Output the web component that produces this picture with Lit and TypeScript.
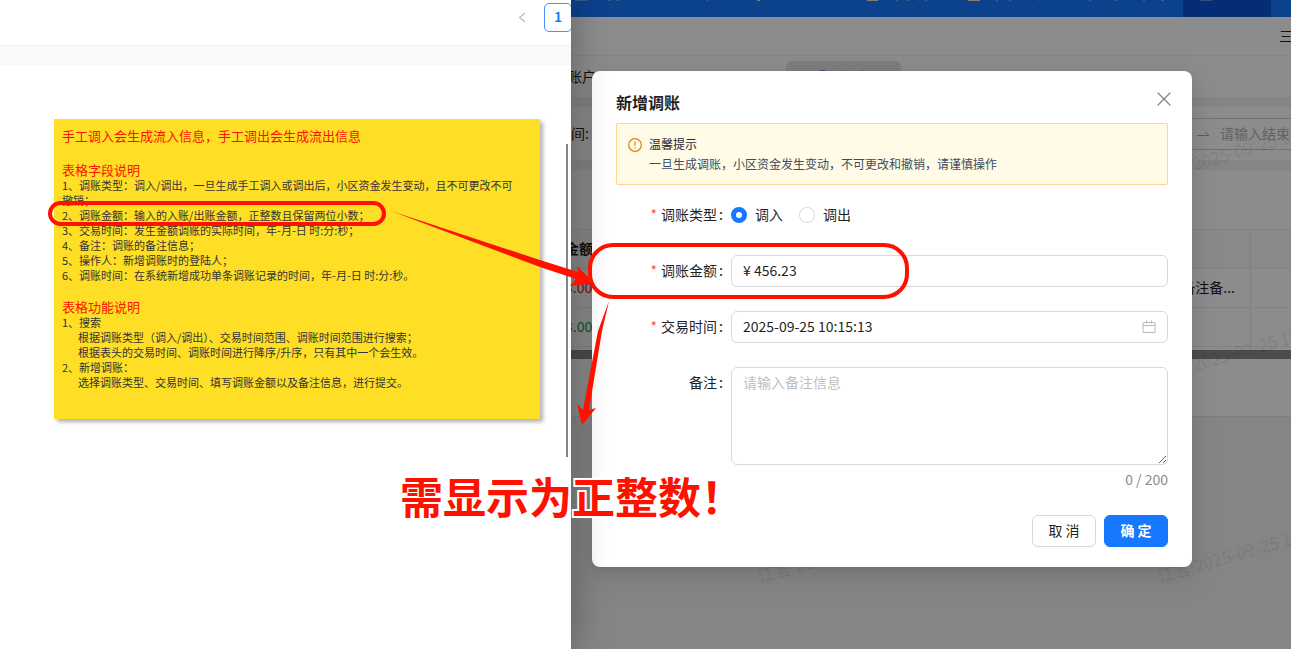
import { LitElement, html, css, svg } from "lit";
import { customElement } from "lit/decorators.js";

const FONT = css`"Noto Sans CJK SC", "Noto Sans", sans-serif`;

/* Requirement notes on the left side of the board. */
@customElement("note-pane")
class NotePane extends LitElement {
  static styles = css`
    :host {
      display: block;
      position: relative;
      z-index: 3;
      background: #fff;
      box-shadow: 6px 0 30px rgba(0, 0, 0, 0.25);
      font-family: ${FONT};
    }
    .pager {
      display: flex;
      justify-content: flex-end;
      align-items: flex-start;
      gap: 15px;
      height: 46px;
      box-sizing: border-box;
      padding-top: 3px;
      border-bottom: 1px solid #f0f0f0;
      overflow: hidden;
    }
    .prev, .page {
      box-sizing: border-box;
      height: 29px;
      padding: 0 0 2px;
      background: #fff;
      font: bold 13px/25px ${FONT};
    }
    .prev {
      width: 14px;
      border: 0;
      display: flex;
      align-items: center;
      justify-content: center;
    }
    .page {
      width: 28px;
      margin-right: -1px;
      border: 1px solid #4a90ff;
      border-radius: 5px;
      color: #1677ff;
    }
    .band { height: 19px; background: #f8f9fb; }
    .note {
      margin: 54px 31px 0 54px;
      padding: 8px 8px 29px;
      background: #ffde26;
      box-shadow: 3px 3px 4px rgba(0, 0, 0, 0.3);
      color: #333;
      font-size: 11px;
      line-height: 15px;
    }
    .note h2, .note p { margin: 0; font-weight: 400; }
    .note h2 { color: #f10; font-size: 13px; line-height: 17px; }
    .note .lead { margin-bottom: 17px; }
    .note .next { margin-top: 15px; }
    .note .sub { padding-left: 16px; }
    .thumb {
      position: absolute;
      right: 3px;
      top: 144px;
      width: 2px;
      height: 313px;
      background: #858585;
    }
  `;
  render() {
    return html`
      <nav class="pager">
        <button class="prev" aria-label="上一页">
          <svg width="10" height="12" viewBox="0 0 10 12" fill="none" stroke="#b8b8b8" stroke-width="1.1"><path d="M8 2 2.500 6.500l5.500 4.500" /></svg>
        </button>
        <button class="page">1</button>
      </nav>
      <div class="band"></div>
      <article class="note">
        <h2 class="lead">手工调入会生成流入信息，手工调出会生成流出信息</h2>
        <h2>表格字段说明</h2>
        <p>1、调账类型：调入/调出，一旦生成手工调入或调出后，小区资金发生变动，且不可更改不可<br />撤销；</p>
        <p>2、调账金额：输入的入账/出账金额，正整数且保留两位小数；</p>
        <p>3、交易时间：发生金额调账的实际时间，年-月-日 时:分:秒；</p>
        <p>4、备注：调账的备注信息；</p>
        <p>5、操作人：新增调账时的登陆人；</p>
        <p>6、调账时间：在系统新增成功单条调账记录的时间，年-月-日 时:分:秒。</p>
        <h2 class="next">表格功能说明</h2>
        <p>1、搜索</p>
        <p class="sub">根据调账类型（调入/调出）、交易时间范围、调账时间范围进行搜索；</p>
        <p class="sub">根据表头的交易时间、调账时间进行降序/升序，只有其中一个会生效。</p>
        <p>2、新增调账：</p>
        <p class="sub">选择调账类型、交易时间、填写调账金额以及备注信息，进行提交。</p>
      </article>
      <div class="thumb"></div>
    `;
  }
}

/* Dimmed list page behind the dialog. */
@customElement("ledger-page")
class LedgerPage extends LitElement {
  static styles = css`
    :host {
      display: block;
      position: relative;
      overflow: hidden;
      background: #f2f2f2;
      color: #1f1f1f;
      font: 14px/22px ${FONT};
    }
    .top {
      display: flex;
      justify-content: flex-end;
      height: 17px;
      padding-right: 20px;
      background: #1677ff;
    }
    .current { width: 88px; background: #0852d8; }
    .tools {
      display: flex;
      justify-content: flex-end;
      height: 39px;
      box-sizing: border-box;
      padding-top: 7px;
      background: #fff;
      border-bottom: 1px solid #f0f0f0;
    }
    .tools span { width: 12px; white-space: nowrap; }
    .tabs {
      display: flex;
      gap: 190px;
      height: 41px;
      box-sizing: border-box;
      padding-top: 5px;
      background: #fff;
      line-height: 30px;
    }
    .tabs a { color: inherit; text-decoration: none; text-indent: -3px; }
    .tabs a.on {
      width: 88px;
      padding-left: 27px;
      border-radius: 6px 6px 0 0;
      background: #e4e4e4;
      color: #1677ff;
      text-indent: 0;
    }
    .filter {
      display: flex;
      align-items: center;
      justify-content: space-between;
      height: 53px;
      margin: 10px 0;
      background: #fff;
      white-space: nowrap;
    }
    .filter > span, .range span { padding-bottom: 2px; }
    .range {
      display: flex;
      align-items: center;
      gap: 10px;
      width: 94px;
      height: 30px;
      padding-left: 40px;
      border: solid #d0d0d0;
      border-width: 1px 0;
      color: #b4b4b4;
    }
    .range span { width: 71px; }
    .card { padding: 59px 0 57px; background: #fff; border-bottom: 1px solid #e6e6e6; }
    table { width: 100%; border-collapse: collapse; table-layout: fixed; }
    th, td {
      height: 36px;
      padding: 0 0 2px;
      border: solid #ededed;
      border-width: 1px 0 0;
      text-align: left;
      text-indent: -6px;
    }
    th { background: #fafafa; font-weight: 700; }
    tr:last-child td { border-bottom-width: 1px; }
    .amount { width: 500px; }
    .remark { padding-right: 15px; border-right-width: 1px; text-align: right; }
    .rest { width: 40px; }
    .in { color: #d9202a; }
    .out { color: #12a05c; }
    .bar { height: 9px; margin-top: 3px; background: #8a8a8a; }
    .mask { position: absolute; inset: 0; background: rgba(0, 0, 0, 0.45); }
    .marks {
      position: absolute;
      left: 0;
      top: 0;
      font-size: 17px;
      fill: rgba(0, 0, 0, 0.09);
    }
    .bits { position: absolute; left: 0; top: 0; }
  `;
  render() {
    const marks = [[189, 583], [587, 181], [587, 382], [589, 583]];
    return html`
      <div class="top"><div class="current"></div></div>
      <svg class="bits" width="720" height="2" fill="#fff" aria-hidden="true">
        <path opacity=".35" d="M4 0h12v1H4zM37 0h3v1h-3zM45 0h3v1h-3zM135 0h2v1h-2zM629 0h12v1h-12z" />
        <path fill="#f4e3c0" d="M186 0h3v1h-3zM296 0h11v1h-11zM397 0h12v1h-12z" />
        <path opacity=".4" d="M325 0h2v1h-2zM335 0h3v1h-3zM347 0h1v1h-1zM354 0h2v1h-2zM425 0h2v1h-2zM438 0h2v1h-2zM467 0h1v1h-1zM518 0h2v1h-2zM543 0h3v1h-3zM572 0h2v1h-2zM590 0h3v1h-3z" />
      </svg>
      <div class="tools"><span>三</span></div>
      <nav class="tabs"><a href="#">账户</a><a class="on" href="#">手工调账</a></nav>
      <div class="filter">
        <span>间:</span>
        <div class="range">
          <svg width="13" height="8" viewBox="0 0 13 8" fill="none" stroke="#aaa"><path d="M0 5.500h12L8 2" /></svg>
          <span>请输入结束</span>
        </div>
      </div>
      <section class="card">
        <table>
          <thead><tr><th class="amount">金额</th><th class="remark"></th><th class="rest"></th></tr></thead>
          <tbody>
            <tr><td class="in">3.00</td><td class="remark">备注备...</td><td></td></tr>
            <tr><td class="out">3.00</td><td class="remark"></td><td></td></tr>
          </tbody>
        </table>
        <div class="bar"></div>
      </section>
      <div class="mask"></div>
      <svg class="marks" width="720" height="649" aria-hidden="true">
        ${marks.map(([x, y]) => svg`<text transform="translate(${x} ${y}) rotate(-16)">江言 2025-09-25 10:15</text>`)}
      </svg>
    `;
  }
}

/* Dialog for adding an adjustment entry. */
@customElement("adjust-dialog")
class AdjustDialog extends LitElement {
  static styles = css`
    :host {
      display: block;
      box-sizing: border-box;
      width: 600px;
      padding: 20px 24px;
      border-radius: 8px;
      background: #fff;
      box-shadow: 0 6px 16px rgba(0, 0, 0, 0.08), 0 3px 6px -4px rgba(0, 0, 0, 0.12), 0 9px 28px 8px rgba(0, 0, 0, 0.05);
      color: #1f1f1f;
      font: 14px/22px ${FONT};
    }
    header { display: flex; justify-content: space-between; align-items: flex-start; }
    h1 { margin: 0 0 2px; font-size: 16px; line-height: 22px; font-weight: 700; }
    .close {
      display: flex;
      width: 16px;
      height: 16px;
      margin-right: -4px;
      padding: 0;
      border: 0;
      background: none;
    }
    .alert {
      display: grid;
      grid-template-columns: 14px 1fr;
      gap: 0 7px;
      margin: 8px 0 14px;
      padding: 10px 11px;
      border: 1px solid #ffd591;
      border-radius: 2px;
      background: #fffbe6;
      color: #414b5c;
      font-size: 12px;
      line-height: 20px;
    }
    .alert svg { margin-top: 4px; }
    .alert strong { font-weight: 400; color: #1f2838; }
    .alert span { grid-column: 2; }
    form { display: grid; gap: 24px; }
    .row {
      display: grid;
      grid-template-columns: 115px minmax(0, 1fr);
      min-height: 32px;
    }
    .label { line-height: 30px; text-align: right; }
    .label::after { content: ":"; margin: 0 8px 0 2px; }
    .must::before { content: "*"; margin-right: 4px; color: #ff4d4f; }
    .radios { display: flex; align-items: center; gap: 16px; }
    .radios label { display: flex; align-items: center; gap: 8px; }
    .radios span { padding-bottom: 2px; }
    .radios input {
      appearance: none;
      box-sizing: border-box;
      width: 16px;
      height: 16px;
      margin: 0;
      border: 1px solid #d9d9d9;
      border-radius: 50%;
      background: #fff;
    }
    .radios input:checked { border: 5px solid #1677ff; }
    .field {
      display: flex;
      align-items: center;
      box-sizing: border-box;
      height: 32px;
      padding: 0 11px;
      border: 1px solid #d9d9d9;
      border-radius: 6px;
    }
    .field input {
      flex: 1;
      min-width: 0;
      padding: 0 0 2px;
      border: 0;
      outline: 0;
      background: none;
      color: inherit;
      font: inherit;
    }
    textarea {
      display: block;
      box-sizing: border-box;
      width: 100%;
      height: 98px;
      padding: 3px 11px;
      border: 1px solid #d9d9d9;
      border-radius: 6px;
      outline: 0;
      color: inherit;
      font: inherit;
      resize: vertical;
    }
    textarea::placeholder { color: #bfbfbf; }
    .count { margin: 3px 0 1px; color: #8c8c8c; text-align: right; }
    footer { display: flex; justify-content: flex-end; gap: 8px; margin-top: 24px; }
    footer button {
      box-sizing: border-box;
      width: 64px;
      height: 32px;
      padding: 0 0 2px;
      border: 1px solid #d9d9d9;
      border-radius: 6px;
      background: #fff;
      box-shadow: 0 2px 0 rgba(0, 0, 0, 0.02);
      color: inherit;
      font: inherit;
    }
    footer .ok { border-color: #1677ff; background: #1677ff; color: #fff; font-weight: 700; }
  `;
  render() {
    return html`
      <header>
        <h1>新增调账</h1>
        <button class="close" aria-label="关闭">
          <svg width="16" height="16" viewBox="0 0 16 16" stroke="#858585" stroke-width="1.3" stroke-linecap="round"><path d="m2 2 12 12M14 2 2 14" /></svg>
        </button>
      </header>
      <div class="alert" role="alert">
        <svg width="14" height="14" viewBox="0 0 14 14" fill="none" stroke="#d9821b"><circle cx="7" cy="7" r="6.300" stroke-width="1.2" /><path d="M7 3.500v4.300M7 9.300v1.300" stroke-width="1.2" /></svg>
        <strong>温馨提示</strong>
        <span>一旦生成调账，小区资金发生变动，不可更改和撤销，请谨慎操作</span>
      </div>
      <form>
        <div class="row">
          <span class="label must" id="kind">调账类型</span>
          <div class="radios" role="radiogroup" aria-labelledby="kind">
            <label><input type="radio" name="kind" checked /><span>调入</span></label>
            <label><input type="radio" name="kind" /><span>调出</span></label>
          </div>
        </div>
        <div class="row">
          <label class="label must" for="amount">调账金额</label>
          <div class="field"><input id="amount" value="¥ 456.23" /></div>
        </div>
        <div class="row">
          <label class="label must" for="time">交易时间</label>
          <div class="field">
            <input id="time" value="2025-09-25 10:15:13" />
            <svg width="14" height="14" viewBox="0 0 14 14" fill="none" stroke="#b8b8b8"><path d="M1 2.500h12v10H1zM1 5.500h12M4.500 .5v3M9.500 .5v3" /></svg>
          </div>
        </div>
        <div class="row">
          <label class="label" for="remark">备注</label>
          <div>
            <textarea id="remark" maxlength="200" placeholder="请输入备注信息"></textarea>
            <div class="count">0 / 200</div>
          </div>
        </div>
      </form>
      <footer>
        <button>取 消</button>
        <button class="ok">确 定</button>
      </footer>
    `;
  }
}

@customElement("app-root")
class AppRoot extends LitElement {
  static styles = css`
    :host { display: block; }
    .board {
      position: relative;
      display: grid;
      grid-template-columns: minmax(0, 571fr) minmax(0, 720fr);
      height: 100vh;
      overflow: hidden;
    }
    .app { position: relative; display: grid; }
    adjust-dialog { position: absolute; left: 21px; top: 71px; z-index: 2; }
    .ink { position: absolute; left: 0; top: 0; z-index: 4; pointer-events: none; }
    .shout {
      position: absolute;
      left: 400px;
      top: 465px;
      z-index: 4;
      margin: 0;
      color: #f10;
      font: 700 43px/60px ${FONT};
      white-space: nowrap;
      -webkit-text-stroke: 4px #fff;
      paint-order: stroke fill;
    }
  `;
  render() {
    return html`
      <main class="board">
        <note-pane></note-pane>
        <div class="app">
          <ledger-page></ledger-page>
          <adjust-dialog></adjust-dialog>
        </div>
        <svg class="ink" width="960" height="440" fill="none" aria-hidden="true">
          <rect x="50" y="203" width="334" height="21" rx="10.500" stroke="#f10" stroke-width="4" />
          <rect x="590" y="245" width="317" height="52" rx="23" stroke="#f10" stroke-width="4" />
          <path fill="#f10" d="M391 211 540 260l38 12-1-6 17 17-24 3 6-7-36-12Z" />
          <path fill="#f10" d="M609 301 598 331 583 410l-6-6 5 21 14-17-7 2 13-79Z" />
        </svg>
        <p class="shout">需显示为正整数！</p>
      </main>
    `;
  }
}
